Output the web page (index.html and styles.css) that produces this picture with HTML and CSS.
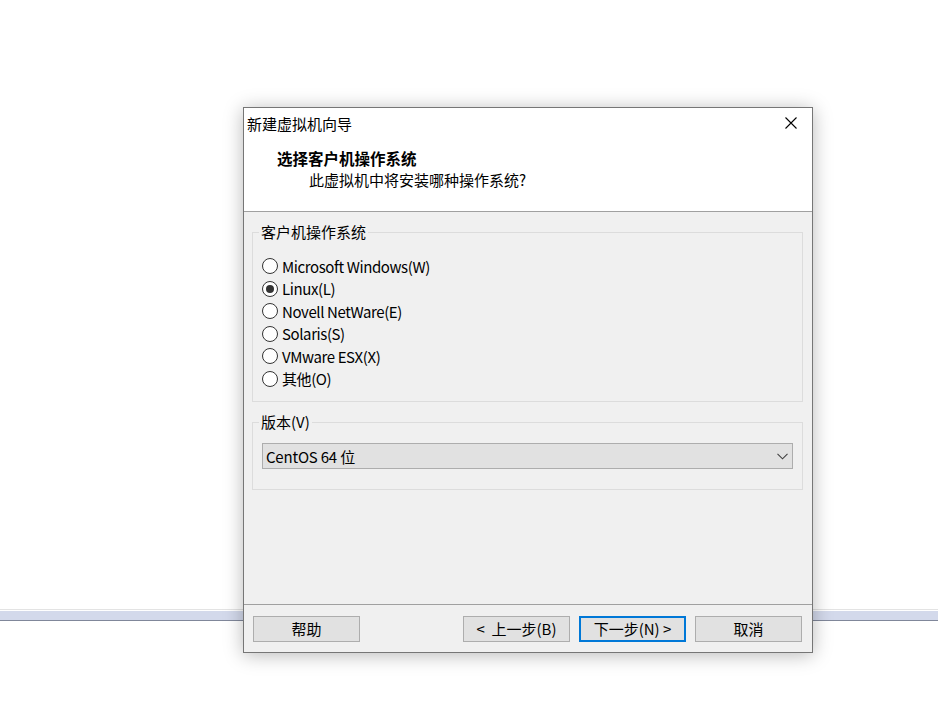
FILE: index.html
```html
<!DOCTYPE html>
<html lang="zh-CN">
<head>
<meta charset="utf-8">
<title>新建虚拟机向导</title>
<link rel="stylesheet" href="styles.css">
</head>
<body>
<div class="desktop">
  <div class="band"></div>
  <div class="dialog">
    <div class="top">
      <div class="titlebar">
        <span class="title">新建虚拟机向导</span>
        <svg class="close" width="12" height="12" viewBox="0 0 12 12"><path d="M0.5 0.5 L11.5 11.5 M11.5 0.5 L0.5 11.5" stroke="#000" stroke-width="1.1" fill="none"/></svg>
      </div>
      <div class="header">
        <div class="h-title">选择客户机操作系统</div>
        <div class="h-sub">此虚拟机中将安装哪种操作系统?</div>
      </div>
    </div>
    <div class="body">
      <fieldset class="group os">
        <legend>客户机操作系统</legend>
        <div class="radio"><span class="dot"></span>Microsoft Windows(W)</div>
        <div class="radio checked"><span class="dot"></span>Linux(L)</div>
        <div class="radio"><span class="dot"></span>Novell NetWare(E)</div>
        <div class="radio"><span class="dot"></span>Solaris(S)</div>
        <div class="radio"><span class="dot"></span>VMware ESX(X)</div>
        <div class="radio"><span class="dot"></span>其他(O)</div>
      </fieldset>
      <fieldset class="group ver">
        <legend>版本(V)</legend>
        <div class="select">
          <span>CentOS 64 位</span>
          <svg class="chev" width="11" height="7" viewBox="0 0 11 7"><path d="M0.5 0.8 L5.5 5.8 L10.5 0.8" stroke="#404040" stroke-width="1.1" fill="none"/></svg>
        </div>
      </fieldset>
    </div>
    <div class="footer">
      <button class="btn">帮助</button>
      <div class="spacer"></div>
      <button class="btn">&lt;&nbsp; 上一步(B)</button>
      <button class="btn default">下一步(N) &gt;</button>
      <button class="btn">取消</button>
    </div>
  </div>
</div>
</body>
</html>
```

FILE: styles.css
```css
html, body {
  margin: 0;
  padding: 0;
  background: #ffffff;
}
body {
  font-family: "Noto Sans CJK SC", "Noto Sans", sans-serif;
  font-size: 15px;
  color: #000;
}
.desktop {
  position: relative;
  width: 938px;
  height: 719px;
  overflow: hidden;
}
.band {
  position: absolute;
  left: 0;
  right: 0;
  top: 609px;
  height: 12px;
  border-top: 1px solid #e3e3e3;
  background: linear-gradient(#ffffff 0 1px, #d3d9eb 1px 10px, #80879a 10px 11px);
  box-sizing: border-box;
}
.dialog {
  position: absolute;
  left: 243px;
  top: 107px;
  width: 570px;
  height: 546px;
  box-sizing: border-box;
  border: 1px solid #767676;
  background: #f0f0f0;
  box-shadow: 0 2px 18px rgba(0, 0, 0, 0.28);
  display: flex;
  flex-direction: column;
}
.top {
  background: #ffffff;
  border-bottom: 1px solid #a0a0a0;
}
.titlebar {
  height: 31px;
  display: flex;
  align-items: center;
  padding-left: 3px;
  padding-right: 15px;
}
.title {
  flex: 1;
  line-height: 31px;
}
.close {
  display: block;
  margin-top: -1px;
}
.header {
  padding: 8px 0 20px 0;
}
.h-title {
  font-weight: bold;
  font-size: 15.5px;
  line-height: 22px;
  padding-left: 33px;
}
.h-sub {
  line-height: 22px;
  padding-left: 65px;
}
.body {
  flex: 1;
  padding-top: 10px;
}
.group {
  margin: 0 9px 0 8px;
  border: 1px solid #dcdcdc;
  padding: 0 9px;
  min-width: 0;
}
.group legend {
  margin-left: -3px;
  padding: 0 2px;
  line-height: 20px;
  color: #000;
}
.os {
  padding-top: 13px;
  padding-bottom: 11px;
}
.radio {
  height: 22.5px;
  display: flex;
  align-items: center;
  letter-spacing: -0.4px;
}
.dot {
  width: 14px;
  height: 14px;
  border: 1px solid #333;
  border-radius: 50%;
  background: #fff;
  margin-right: 4px;
  box-sizing: content-box;
  position: relative;
  flex: none;
}
.radio.checked .dot::after {
  content: "";
  position: absolute;
  left: 3px;
  top: 3px;
  width: 8px;
  height: 8px;
  border-radius: 50%;
  background: #333;
}
.ver {
  margin-top: 10px;
  padding-top: 11px;
  padding-bottom: 20px;
}
.select {
  height: 26px;
  box-sizing: border-box;
  border: 1px solid #adadad;
  background: #e1e1e1;
  display: flex;
  align-items: center;
  padding-left: 3px;
  padding-right: 4px;
}
.select span {
  flex: 1;
  letter-spacing: -0.2px;
}
.chev {
  display: block;
}
.footer {
  border-top: 1px solid #a0a0a0;
  display: flex;
  padding: 11px 10px 10px 9px;
  gap: 9px;
}
.spacer {
  flex: 1;
}
.btn {
  width: 107px;
  height: 26px;
  box-sizing: border-box;
  border: 1px solid #adadad;
  background: #e1e1e1;
  font-family: "Noto Sans CJK SC", "Noto Sans", sans-serif;
  font-size: 15px;
  color: #000;
  padding: 0;
  line-height: 22px;
}
.btn.default {
  border: 2px solid #0078d7;
}
```
